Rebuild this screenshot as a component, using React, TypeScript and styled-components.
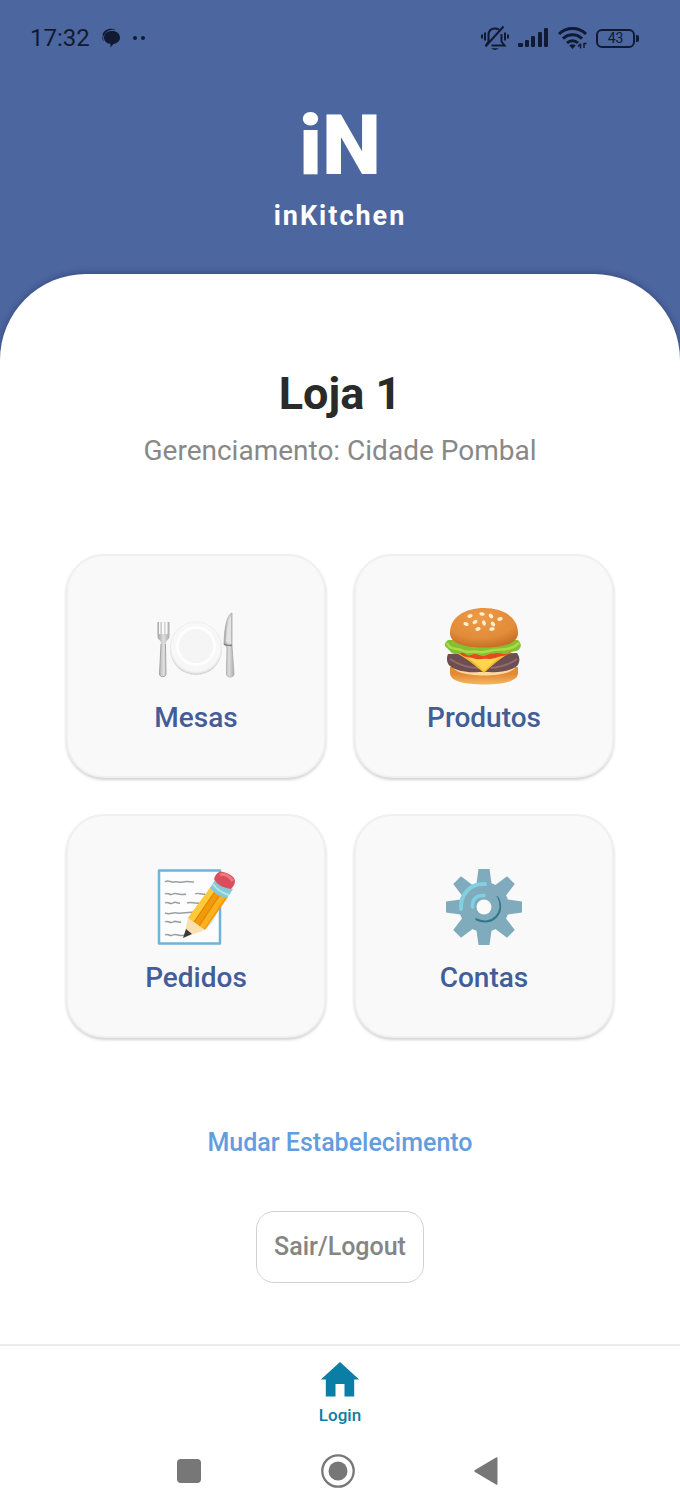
import React from 'react';
import styled, { createGlobalStyle } from 'styled-components';

const GlobalStyle = createGlobalStyle`
	* {
		box-sizing: border-box;
	}
	body {
		margin: 0;
		background: #fff;
		font-family: Roboto, 'Liberation Sans', sans-serif;
	}
	button {
		font-family: inherit;
		cursor: pointer;
	}
`;

const Screen = styled.div`
	display: flex;
	flex-direction: column;
	min-height: 100vh;
	background: #4c669f;
`;

const StatusBar = styled.div`
	display: flex;
	align-items: center;
	justify-content: space-between;
	height: 76px;
	padding: 0 41px 0 30px;
	color: #101b33;
`;

const StatusGroup = styled.div<{ $gap: number }>`
	display: flex;
	align-items: center;
	gap: ${({ $gap }) => $gap}px;
`;

const Clock = styled.span`
	font-size: 24px;
	line-height: 28px;
`;

const Header = styled.header`
	display: flex;
	flex-direction: column;
	align-items: center;
	padding: 20px 20px 40px;
	color: #fff;
`;

const Logo = styled.div`
	font-size: 84px;
	font-weight: 900;
	line-height: 100px;
`;

const Brand = styled.div`
	margin-top: 2px;
	font-size: 27px;
	font-weight: 700;
	line-height: 36px;
	letter-spacing: 2px;
`;

const Sheet = styled.main`
	display: flex;
	flex: 1;
	flex-direction: column;
	align-items: center;
	padding: 93px 66px 61px;
	border-radius: 86px 86px 0 0;
	background: #fff;
	box-shadow: 0 -1px 6px rgba(30, 30, 80, 0.4);
`;

const Title = styled.h1`
	margin: 0;
	color: #2a2a2a;
	font-size: 45px;
	font-weight: 700;
	line-height: 54px;
`;

const Subtitle = styled.p`
	margin: 12px 0 0;
	color: #888;
	font-size: 28px;
	line-height: 36px;
`;

const CardGrid = styled.div`
	display: grid;
	grid-template-columns: 1fr 1fr;
	gap: 36px 28px;
	width: 100%;
	margin-top: 85px;
`;

const Card = styled.button`
	display: flex;
	flex-direction: column;
	align-items: center;
	gap: 14px;
	padding: 51px 10px 41px;
	border: 2px solid #f0f0f0;
	border-radius: 38px;
	background: #f9f9f9;
	box-shadow: 0 2px 3px rgba(0, 0, 0, 0.18);
	color: #435d98;
	font-size: 28px;
	font-weight: 500;
	line-height: 34px;
`;

const SwitchLink = styled.a`
	margin-top: 90px;
	color: #629de0;
	font-size: 25px;
	font-weight: 500;
	line-height: 30px;
	text-decoration: none;
`;

const LogoutButton = styled.button`
	margin-top: 53px;
	padding: 18px 17px;
	border: 1px solid #d2d2d2;
	border-radius: 18px;
	background: #fff;
	color: #858585;
	font-size: 25px;
	font-weight: 500;
	line-height: 34px;
`;

const TabBar = styled.nav`
	display: flex;
	justify-content: center;
	padding: 14px 0 16px;
	border-top: 2px solid #ebebeb;
	background: #fff;
`;

const TabLink = styled.a`
	display: flex;
	flex-direction: column;
	align-items: center;
	gap: 1px;
	color: #0a7ea4;
	font-size: 17px;
	font-weight: 500;
	line-height: 20px;
	text-decoration: none;
`;

const SystemNav = styled.div`
	display: grid;
	grid-template-columns: repeat(3, 1fr);
	padding: 10px 118px 22px 114px;
	background: #fff;
`;

const SystemButton = styled.button`
	display: flex;
	align-items: center;
	justify-content: center;
	height: 40px;
	padding: 0;
	border: 0;
	background: none;
	color: #777;
`;

const ChatIcon = () => (
	<svg width='18' height='20' viewBox='0 0 18 20' fill='currentColor'>
		<path d='M.5 7C1.500 1.500 8.500-.5 14 1.700 8 1.300 3.500 3 1.500 8.500Z' />
		<path d='M10 3c4.700 0 8 2.700 8 6.600 0 3.400-2.700 6-6.500 6.400L8.500 19.500V16C4.500 15.500 2 13 2 9.600 2 5.700 5.300 3 10 3Z' />
		<path d='M.4 8.500c-.4 2.200.2 3.600 1.600 5-.8-1.800-1.100-3.300-.6-5Z' />
	</svg>
);

const DotsIcon = () => (
	<svg width='14' height='6' viewBox='0 0 14 6' fill='currentColor'>
		<circle cx='3' cy='3' r='2' />
		<circle cx='11' cy='3' r='2' />
	</svg>
);

const MutedBellIcon = () => (
	<svg width='28' height='26' viewBox='0 0 28 26' fill='none' stroke='currentColor' strokeWidth='2'>
		<path d='M7.500 15.500V10c0-4 2.500-6.500 6.500-6.500 1.600 0 3 .4 4.100 1.200M20.500 9v7.500l3 4H10.500' />
		<path d='M7.500 14.500v2l-2.500 4' />
		<path d='M22.500 1.500 4.500 21.500' />
		<path d='M4 7.500v8M1 9.500v4M24 7.500v8M27 9.500v4' />
		<path d='M10.500 23.300h7c-1.700 2.200-5.300 2.200-7 0Z' fill='currentColor' stroke='none' />
	</svg>
);

const SignalIcon = () => (
	<svg width='31' height='20' viewBox='0 0 31 20' fill='currentColor'>
		<rect x='0' y='15' width='5' height='4' rx='1' />
		<rect x='7' y='12' width='4' height='7' rx='1' />
		<rect x='13' y='8' width='4' height='11' rx='1' />
		<rect x='20' y='4' width='4' height='15' rx='1' />
		<rect x='26' y='0' width='4' height='19' rx='1' />
	</svg>
);

const WifiIcon = () => (
	<svg width='29' height='24' viewBox='0 0 29 24' fill='none' stroke='currentColor' strokeWidth='3'>
		<path d='M1 8c7.600-7.200 19.400-7.200 27 0' />
		<path d='M5 12.700c5.400-5.200 13.600-5.200 19 0' />
		<path d='M9 17c3.200-3 7.800-3 11 0' />
		<path d='M11.300 19.500c1.800-1.600 4.600-1.600 6.400 0L14.500 23Z' fill='currentColor' stroke='none' />
		<path d='M22.500 17.500v5M20 20.500l2.500-2.500M26 22v-5M26 17.500h2.500' strokeWidth='1.500' />
	</svg>
);

const Battery = styled.div`
	display: flex;
	align-items: center;
	gap: 1px;

	&::after {
		width: 3px;
		height: 7px;
		border-radius: 0 2px 2px 0;
		background: currentColor;
		content: '';
	}
`;

const BatteryLevel = styled.span`
	width: 39px;
	border: 2px solid currentColor;
	border-radius: 6px;
	font-size: 14px;
	line-height: 15px;
	text-align: center;
`;

const PlateIcon = () => (
	<svg width='80' height='80' viewBox='0 0 80 80'>
		<defs>
			<linearGradient id='steel' x1='0' x2='1'>
				<stop offset='0' stopColor='#a4a4a4' />
				<stop offset='.5' stopColor='#dedede' />
				<stop offset='1' stopColor='#ababab' />
			</linearGradient>
		</defs>
		<circle cx='40' cy='42' r='26' fill='#d6d6d6' />
		<circle cx='40' cy='40.500' r='26' fill='#ececec' />
		<circle cx='40' cy='40' r='25' fill='#f7f7f7' />
		<circle cx='40' cy='39' r='18.500' fill='#f5f5f5' stroke='#fff' strokeWidth='2.500' />
		<path d='M1.500 15v14c0 2 .8 3.500 3 5l.500 3-1.500 30c0 4 6.500 4 6.500 0l-.500-30 1-3c2-1.500 3-3 3-5V15h-2v12H9.500V15h-1.500v12H6V15H4.500v12H3V15Z' fill='url(#steel)' />
		<path d='M5 37 3.500 67c0 3.500 6.500 3.500 6.500 0L9.500 37' fill='none' stroke='#a6a6a6' />
		<path d='M76 6c-4 1-7.500 11-8 31 0 1 3 2 3 4l-.500 26c0 4 7.500 4 7.500 0L76 39Z' fill='url(#steel)' stroke='#a8a8a8' strokeWidth='.8' />
		<path d='M75 9c-2.800 5-4.500 14-5 26l5 2Z' fill='#e3e3e3' />
		<path d='M68 37c2 1.500 5 1.500 8 1.500' fill='none' stroke='#7d7d7d' strokeWidth='1.500' />
	</svg>
);

const SEEDS = [
	[26, 9, -20],
	[38, 7, 10],
	[47, 9, 50],
	[56, 12, -20],
	[31, 15, -30],
	[40, 16, 65],
	[22, 17, 20],
	[49, 17, 50],
	[34, 22, -20],
	[48, 22, -10]
];

const BurgerIcon = () => (
	<svg width='80' height='80' viewBox='0 0 80 80'>
		<defs>
			<radialGradient id='bun' cx='.45' cy='.25' r='.75'>
				<stop offset='0' stopColor='#ee9a48' />
				<stop offset='.7' stopColor='#e28b38' />
				<stop offset='1' stopColor='#c96f28' />
			</radialGradient>
			<linearGradient id='bottomBun' x1='0' y1='0' x2='0' y2='1'>
				<stop offset='.4' stopColor='#e28a35' />
				<stop offset='1' stopColor='#f6b75e' />
			</linearGradient>
		</defs>
		<path d='M6 60h68v6c0 8-14 11.500-34 11.500S6 74 6 66Z' fill='url(#bottomBun)' />
		<path d='M8 58c0 14 64 14 64 0Z' fill='#ffd9a1' />
		<path d='M4 47c-2 4-1 10 2 12 6 5 18 7 29 6h10c12 1 25-2 29-7 2-4 2-8-1-12Z' fill='#6e4e50' />
		<path d='M6 52c9 6 18 9 29 9M47 61c11-1 19-4 26-9' fill='none' stroke='#8d6b6e' strokeWidth='2' />
		<path d='M3 42c14 5 23 12 37 24 13-12 20-18 36-24Z' fill='#f6b82c' />
		<path d='M7 42c14 5 21 11 33 22 11-11 19-17 32-22Z' fill='#ffd54f' />
		<path d='M13 42c3 9 12 8 16 9 6 3 10 0 15 1 6 0 9-2 14-3 5 0 8-3 11-7Z' fill='#e5491f' />
		<path d='M4 33c-4 3-4 6-1 8 3 2 4 6 8 6s5-2 9-1c4 4 6 2 10 1 5 0 8 4 13 1 4-2 6-1 10-2 5 0 9 3 13-1 3-2 7 1 10-4 2-3 0-6-2-8Z' fill='#86bf30' />
		<path d='M3 36c3 7 9 5 14 7 6 4 12 0 18 2 6 1 9-1 14-2 8-1 18 1 26-7' fill='none' stroke='#a8dc48' strokeWidth='2.500' />
		<path d='M6 26C6 10 21 1 40 1s34 9 34 25c0 10-13 14.500-34 14.500S6 36 6 26Z' fill='url(#bun)' />
		{SEEDS.map(([x, y, angle]) => (
			<ellipse
				key={`${x}-${y}`}
				cx={x}
				cy={y}
				rx='2.700'
				ry='1.800'
				fill='#fff0cf'
				transform={`rotate(${angle} ${x} ${y})`}
			/>
		))}
	</svg>
);

const MemoIcon = () => (
	<svg width='80' height='80' viewBox='0 0 80 80'>
		<path d='M3 3.500h61v73H3Z' fill='#fdfdfd' stroke='#6db3da' strokeWidth='2.500' strokeLinejoin='round' />
		<path
			d='M9 15c3-3 6 1 9 0s5 1 9 0 7 0 11 0M9 27c3-2 5 2 8 0s8 2 13 0M39 27c3-2 6 1 10 0M9 36c3-2 5 2 8 0s5 1 7 0M31 36c4-2 7 1 12 0M9 46c5 2 8-1 12 0s10-1 20-1M9 55c3-2 5 2 8 0s5 1 8 0M9 68c3-2 5 2 8 0s7 2 13 0'
			fill='none'
			stroke='#98a0a4'
			strokeWidth='1.500'
		/>
		<path d='M36 66C52 65 61 54 62 38L58 34 44 57Z' fill='#d3ebf7' />
		<path d='m32 51 23-31 17 10-23 33Z' fill='#f39a0a' />
		<path d='m32 51 23-31 5 3-22 32Z' fill='#ffca3a' />
		<path d='m43 59 22-33 5 3-22 33Z' fill='#ffb01f' />
		<path d='m38 55 22-32M43 59l22-33' stroke='#dc8500' strokeWidth='1.200' />
		<path d='m32 51 17 12-14 5-7 3 2-11Z' fill='#f9e0ae' />
		<path d='m30 62 6 5-9 4Z' fill='#373b3d' />
		<path d='m59 13-5 8c5 6 10 9 17 10l6-9c-8-2-14-4-18-9Z' fill='#85c9d6' />
		<path d='M57 17c4 6 9 9 16 11' fill='none' stroke='#b4e5ec' strokeWidth='2' />
		<path d='M58 12c2-6 5-8 9-7 6 1 12 5 12 9 0 3-2 6-4 8-7-1-14-4-17-10Z' fill='#dc4c5a' />
		<path d='M64 8c4-2 9 1 13 6' fill='none' stroke='#ee7680' strokeWidth='3' />
	</svg>
);

const GearIcon = () => (
	<svg width='80' height='80' viewBox='0 0 80 80'>
		<g fill='#7fabbc'>
			{[0, 45, 90, 135, 180, 225, 270, 315].map((angle) => (
				<path
					key={angle}
					d='M32 20 34.500 2h11L48 20Z'
					transform={`rotate(${angle} 40 40)`}
				/>
			))}
			<circle cx='40' cy='40' r='25' />
		</g>
		<g fill='none' strokeLinecap='round'>
			<path d='M17 42C16 27 27 16 41 17' stroke='#82cfe0' strokeWidth='4' />
			<path d='M53 31c8 14-5 28-20 21' stroke='#2f7889' strokeWidth='3.500' />
			<path d='M52 31c7 13-5 26-19 19' stroke='#7fabbc' strokeWidth='3' />
			<path d='M28.500 40C28 32 33 28 40 28.500' stroke='#82cfe0' strokeWidth='3.500' />
		</g>
		<circle cx='40' cy='40' r='7.500' fill='#fafafa' />
	</svg>
);

const HomeIcon = () => (
	<svg width='40' height='44' viewBox='0 0 40 44' fill='currentColor'>
		<path d='M20 2 .800 19.500h5V36.500h9.700V24h9v12.500h9.700V19.500h5Z' />
	</svg>
);

const SquareIcon = () => (
	<svg width='26' height='26' viewBox='0 0 26 26' fill='currentColor'>
		<rect x='1' y='1' width='24' height='24' rx='4' />
	</svg>
);

const CircleIcon = () => (
	<svg width='36' height='36' viewBox='0 0 36 36'>
		<circle cx='18' cy='18' r='15.700' fill='none' stroke='currentColor' strokeWidth='2.300' />
		<circle cx='18' cy='18' r='9.500' fill='currentColor' />
	</svg>
);

const BackIcon = () => (
	<svg width='26' height='30' viewBox='0 0 26 30' fill='currentColor'>
		<path d='M1 14 22 1.500q1.500-.8 1.500 1v25q0 1.800-1.500 1L1 16q-1.500-1 0-2Z' />
	</svg>
);

const menuItems = [
	{ icon: <PlateIcon />, label: 'Mesas' },
	{ icon: <BurgerIcon />, label: 'Produtos' },
	{ icon: <MemoIcon />, label: 'Pedidos' },
	{ icon: <GearIcon />, label: 'Contas' }
];

const App = () => {
	return (
		<>
			<GlobalStyle />
			<Screen>
				<StatusBar>
					<StatusGroup $gap={12}>
						<Clock>17:32</Clock>
						<ChatIcon />
						<DotsIcon />
					</StatusGroup>
					<StatusGroup $gap={9}>
						<MutedBellIcon />
						<SignalIcon />
						<WifiIcon />
						<Battery>
							<BatteryLevel>43</BatteryLevel>
						</Battery>
					</StatusGroup>
				</StatusBar>
				<Header>
					<Logo>iN</Logo>
					<Brand>inKitchen</Brand>
				</Header>
				<Sheet>
					<Title>Loja 1</Title>
					<Subtitle>Gerenciamento: Cidade Pombal</Subtitle>
					<CardGrid>
						{menuItems.map(({ icon, label }) => (
							<Card
								key={label}
								type='button'
							>
								{icon}
								{label}
							</Card>
						))}
					</CardGrid>
					<SwitchLink href='#estabelecimento'>Mudar Estabelecimento</SwitchLink>
					<LogoutButton type='button'>Sair/Logout</LogoutButton>
				</Sheet>
				<TabBar>
					<TabLink href='#login'>
						<HomeIcon />
						Login
					</TabLink>
				</TabBar>
				<SystemNav>
					<SystemButton
						type='button'
						aria-label='Recentes'
					>
						<SquareIcon />
					</SystemButton>
					<SystemButton
						type='button'
						aria-label='Início'
					>
						<CircleIcon />
					</SystemButton>
					<SystemButton
						type='button'
						aria-label='Voltar'
					>
						<BackIcon />
					</SystemButton>
				</SystemNav>
			</Screen>
		</>
	);
};

export default App;
